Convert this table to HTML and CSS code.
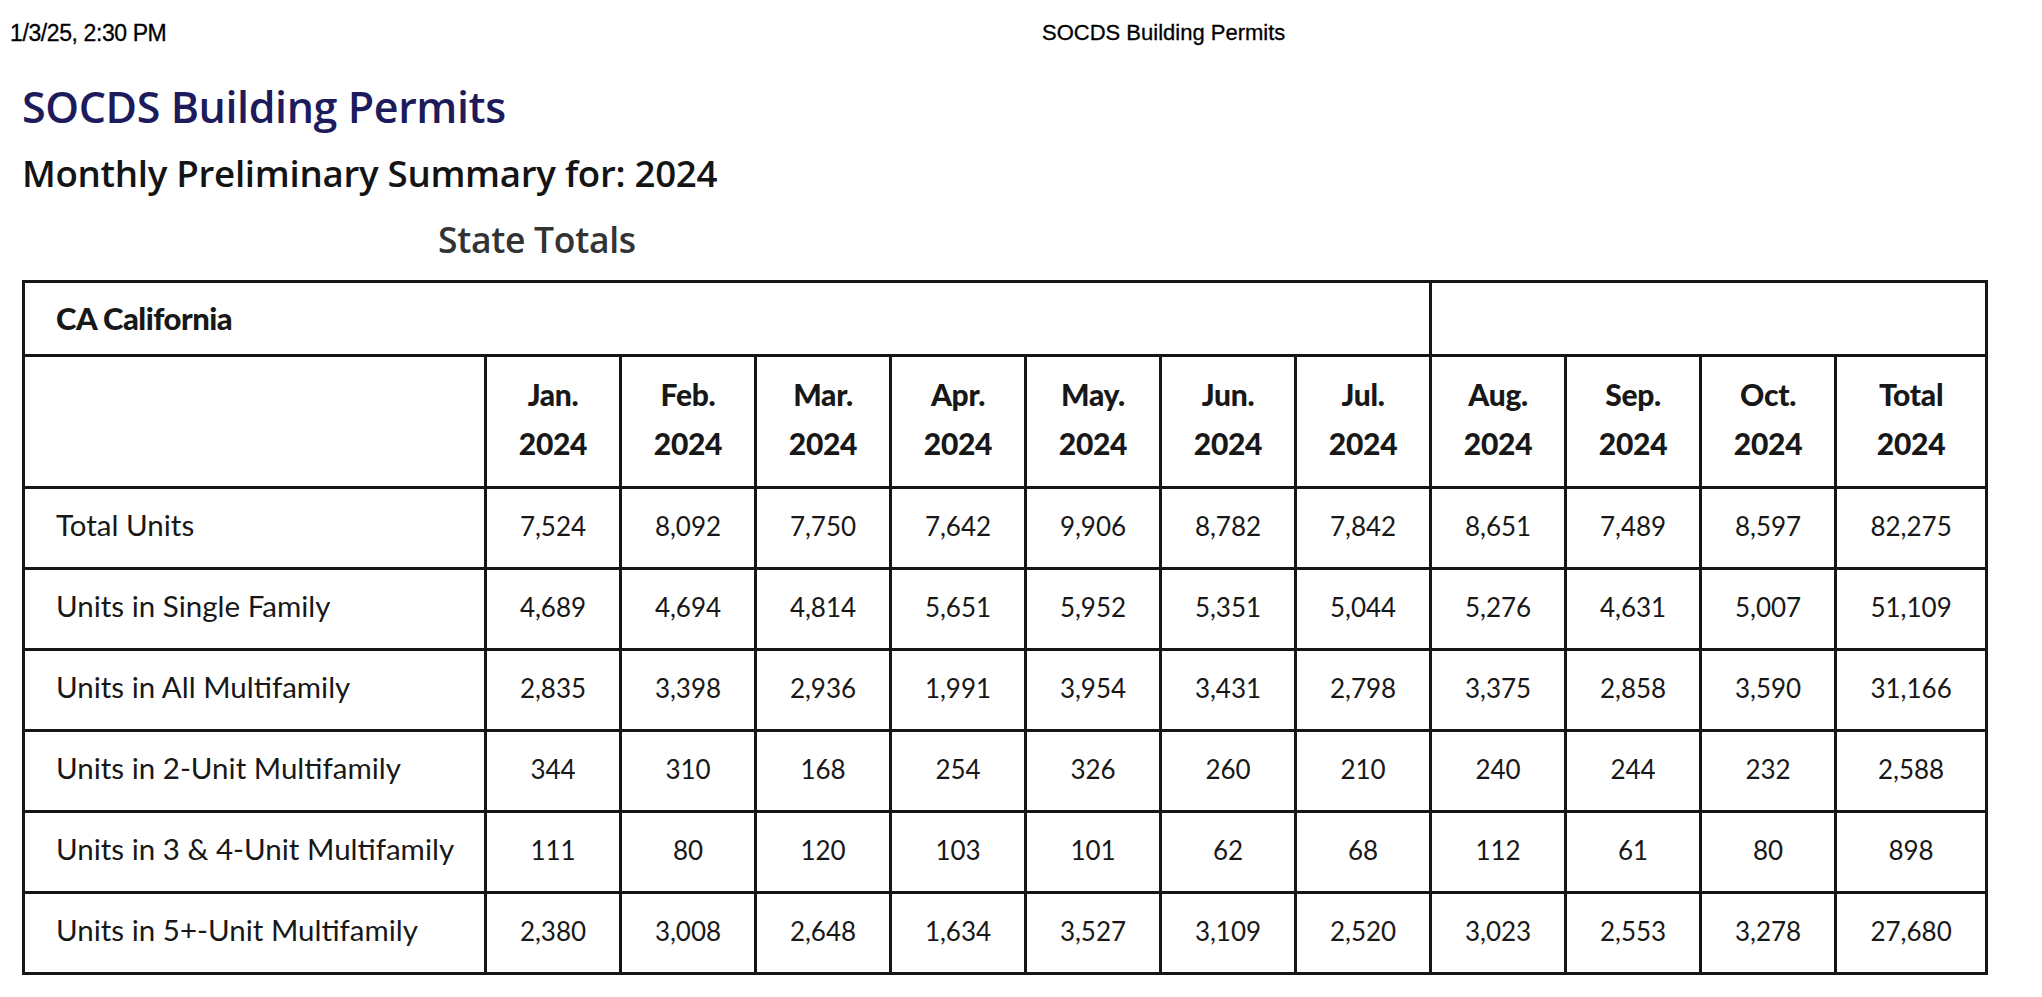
FILE: index.html
```html
<!DOCTYPE html>
<html lang="en">
<head>
<meta charset="utf-8">
<title>SOCDS Building Permits</title>
<link rel="stylesheet" href="styles.css">
</head>
<body>
<header class="print-header">
  <span class="print-date">1/3/25, 2:30 PM</span>
  <span class="print-title">SOCDS Building Permits</span>
</header>
<main class="page">
  <h1 class="title">SOCDS Building Permits</h1>
  <h2 class="subtitle">Monthly Preliminary Summary for: 2024</h2>
  <h3 class="section">State Totals</h3>
  <table class="permits">
    <colgroup>
      <col class="c-label">
      <col class="c-month"><col class="c-month"><col class="c-month"><col class="c-month"><col class="c-month">
      <col class="c-month"><col class="c-month"><col class="c-month"><col class="c-month"><col class="c-month">
      <col class="c-total">
    </colgroup>
    <tbody>
      <tr class="state-row">
        <th class="state" colspan="8">CA California</th>
        <td colspan="4"></td>
      </tr>
      <tr class="head-row">
        <th></th>
        <th>Jan.<br>2024</th>
        <th>Feb.<br>2024</th>
        <th>Mar.<br>2024</th>
        <th>Apr.<br>2024</th>
        <th>May.<br>2024</th>
        <th>Jun.<br>2024</th>
        <th>Jul.<br>2024</th>
        <th>Aug.<br>2024</th>
        <th>Sep.<br>2024</th>
        <th>Oct.<br>2024</th>
        <th>Total<br>2024</th>
      </tr>
      <tr class="data-row">
        <td class="label">Total Units</td>
        <td>7,524</td><td>8,092</td><td>7,750</td><td>7,642</td><td>9,906</td><td>8,782</td><td>7,842</td><td>8,651</td><td>7,489</td><td>8,597</td><td>82,275</td>
      </tr>
      <tr class="data-row">
        <td class="label">Units in Single Family</td>
        <td>4,689</td><td>4,694</td><td>4,814</td><td>5,651</td><td>5,952</td><td>5,351</td><td>5,044</td><td>5,276</td><td>4,631</td><td>5,007</td><td>51,109</td>
      </tr>
      <tr class="data-row">
        <td class="label">Units in All Multifamily</td>
        <td>2,835</td><td>3,398</td><td>2,936</td><td>1,991</td><td>3,954</td><td>3,431</td><td>2,798</td><td>3,375</td><td>2,858</td><td>3,590</td><td>31,166</td>
      </tr>
      <tr class="data-row">
        <td class="label">Units in 2-Unit Multifamily</td>
        <td>344</td><td>310</td><td>168</td><td>254</td><td>326</td><td>260</td><td>210</td><td>240</td><td>244</td><td>232</td><td>2,588</td>
      </tr>
      <tr class="data-row">
        <td class="label">Units in 3 &amp; 4-Unit Multifamily</td>
        <td>111</td><td>80</td><td>120</td><td>103</td><td>101</td><td>62</td><td>68</td><td>112</td><td>61</td><td>80</td><td>898</td>
      </tr>
      <tr class="data-row">
        <td class="label">Units in 5+-Unit Multifamily</td>
        <td>2,380</td><td>3,008</td><td>2,648</td><td>1,634</td><td>3,527</td><td>3,109</td><td>2,520</td><td>3,023</td><td>2,553</td><td>3,278</td><td>27,680</td>
      </tr>
    </tbody>
  </table>
</main>
</body>
</html>
```

FILE: styles.css
```css
html, body {
  margin: 0;
  padding: 0;
  background: #ffffff;
}

body {
  color: #111111;
  font-family: "Lato", "Noto Sans", sans-serif;
}

.print-header {
  display: flex;
  align-items: center;
  height: 66px;
  padding-left: 10px;
  font-family: "Liberation Sans", Arial, sans-serif;
  font-size: 22px;
  color: #000000;
  -webkit-text-stroke: 0.3px #000000;
}

.print-date {
  width: 1032px;
  font-size: 23px;
  letter-spacing: -0.4px;
}

.page {
  padding-left: 22px;
}

.title {
  margin: 0;
  height: 82px;
  line-height: 82px;
  font-family: "Open Sans", "Noto Sans", sans-serif;
  font-weight: 600;
  font-size: 43px;
  color: #1d1b5c;
  letter-spacing: -0.4px;
}

.subtitle {
  margin: 0;
  height: 50px;
  line-height: 50px;
  font-family: "Open Sans", "Noto Sans", sans-serif;
  font-weight: 600;
  font-size: 36.7px;
  color: #141414;
  letter-spacing: -0.3px;
}

.section {
  margin: 0 0 0 416px;
  height: 82px;
  line-height: 82px;
  font-family: "Open Sans", "Noto Sans", sans-serif;
  font-weight: 600;
  font-size: 35.5px;
  color: #333333;
  letter-spacing: -0.3px;
}

.permits {
  border-collapse: collapse;
  table-layout: fixed;
  width: 1965px;
  border: 3px solid #161616;
  font-size: 26px;
}

.c-label { width: 462px; }
.c-month { width: 135px; }
.c-total { width: 151px; }

.permits th,
.permits td {
  border: 3px solid #161616;
  padding: 0;
  text-align: center;
  vertical-align: middle;
  color: #181818;
}

.state-row {
  height: 74px;
}

.permits th.state {
  text-align: left;
  padding: 0 0 2px 31px;
  font-weight: 900;
  font-size: 31px;
  letter-spacing: -0.5px;
}

.head-row {
  height: 132px;
}

.head-row th {
  font-weight: 900;
  font-size: 30px;
  line-height: 49px;
  letter-spacing: -0.3px;
  padding-bottom: 5px;
}

.data-row {
  height: 81px;
}

.data-row td {
  padding-bottom: 4px;
}

.permits td.label {
  text-align: left;
  padding: 0 0 8px 31px;
  font-size: 29.5px;
}
```
